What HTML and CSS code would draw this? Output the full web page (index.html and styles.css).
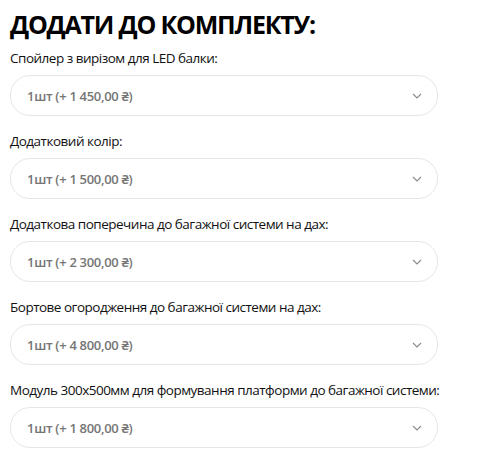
FILE: index.html
```html
<!DOCTYPE html>
<html lang="uk">
<head>
<meta charset="utf-8">
<link rel="stylesheet" href="styles.css">
</head>
<body>
<div class="addons">
  <h2 class="title">ДОДАТИ ДО КОМПЛЕКТУ:</h2>
  <div class="group">
    <div class="label">Спойлер з вирізом для LED балки:</div>
    <div class="select"><span class="value">1шт (+ 1 450,00 ₴)</span><svg class="chev" width="10" height="6" viewBox="0 0 10 6"><path d="M1 1l4 4 4-4" fill="none" stroke="#8a8a8a" stroke-width="1.1"/></svg></div>
  </div>
  <div class="group">
    <div class="label">Додатковий колір:</div>
    <div class="select"><span class="value">1шт (+ 1 500,00 ₴)</span><svg class="chev" width="10" height="6" viewBox="0 0 10 6"><path d="M1 1l4 4 4-4" fill="none" stroke="#8a8a8a" stroke-width="1.1"/></svg></div>
  </div>
  <div class="group">
    <div class="label">Додаткова поперечина до багажної системи на дах:</div>
    <div class="select"><span class="value">1шт (+ 2 300,00 ₴)</span><svg class="chev" width="10" height="6" viewBox="0 0 10 6"><path d="M1 1l4 4 4-4" fill="none" stroke="#8a8a8a" stroke-width="1.1"/></svg></div>
  </div>
  <div class="group">
    <div class="label">Бортове огородження до багажної системи на дах:</div>
    <div class="select"><span class="value">1шт (+ 4 800,00 ₴)</span><svg class="chev" width="10" height="6" viewBox="0 0 10 6"><path d="M1 1l4 4 4-4" fill="none" stroke="#8a8a8a" stroke-width="1.1"/></svg></div>
  </div>
  <div class="group">
    <div class="label">Модуль 300x500мм для формування платформи до багажної системи:</div>
    <div class="select"><span class="value">1шт (+ 1 800,00 ₴)</span><svg class="chev" width="10" height="6" viewBox="0 0 10 6"><path d="M1 1l4 4 4-4" fill="none" stroke="#8a8a8a" stroke-width="1.1"/></svg></div>
  </div>
</div>
</body>
</html>
```
FILE: styles.css
```css
html, body {
  margin: 0;
  padding: 0;
  background: #fff;
}
body {
  font-family: "Open Sans", "Noto Sans", sans-serif;
  color: #111;
}
.addons {
  width: 428px;
  padding: 6px 10px 0 10px;
}
.title {
  margin: 0 0 6px 0;
  font-size: 25px;
  line-height: 36px;
  font-weight: 700;
  letter-spacing: -1.2px;
  color: #000;
}
.label {
  font-size: 13.5px;
  line-height: 20px;
  letter-spacing: -0.5px;
  color: #111;
  margin-bottom: 7px;
  white-space: nowrap;
}
.select {
  box-sizing: border-box;
  height: 41px;
  border: 1px solid #e6e6e6;
  border-radius: 20px;
  display: flex;
  align-items: center;
  justify-content: space-between;
  padding: 0 15px 0 16px;
  margin-bottom: 15px;
}
.value {
  font-size: 13px;
  font-weight: 600;
  letter-spacing: -0.3px;
  color: #757575;
}
.chev {
  display: block;
}
```
